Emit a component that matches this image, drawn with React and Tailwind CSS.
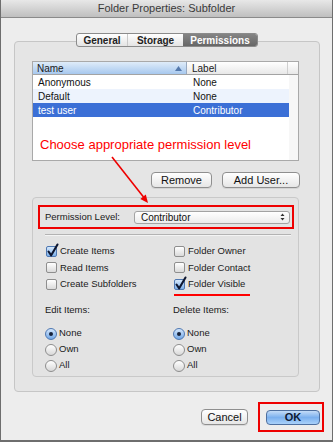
import React from "react";

const font = { fontFamily: '"Liberation Sans", Arial, sans-serif' };

function CheckBox({ checked, label }) {
  return (
    <div className="flex items-center h-[16.5px] gap-[3px]">
      <div
        className={
          checked
            ? "relative w-[11px] h-[11px] rounded-[2px] border border-[#4f78b2] bg-linear-to-b from-[#d6e8fb] to-[#7cb0ea]"
            : "relative w-[11px] h-[11px] rounded-[2px] border border-[#8e8e8e] bg-linear-to-b from-white to-[#dadada]"
        }
      >
        {checked && (
          <svg className="absolute -left-[1px] -top-[4px]" width="14" height="15" viewBox="0 0 14 15">
            <path d="M2.5 8.5 L5.2 12.3 L11.5 1.5" fill="none" stroke="#0d1630" strokeWidth="2.1" strokeLinecap="round" strokeLinejoin="round" />
          </svg>
        )}
      </div>
      <span className="text-[9.5px] text-[#1a1a1a]">{label}</span>
    </div>
  );
}

function Radio({ on, label }) {
  return (
    <div className="flex items-center h-[16px] gap-[2px]">
      <div
        className={
          on
            ? "flex items-center justify-center w-[12px] h-[12px] rounded-full border border-[#4f78b2] bg-linear-to-b from-[#d3e6fb] to-[#72a8e7]"
            : "w-[12px] h-[12px] rounded-full border border-[#8e8e8e] bg-linear-to-b from-white to-[#d8d8d8]"
        }
      >
        {on && <div className="w-[4px] h-[4px] rounded-full bg-[#16223a]" />}
      </div>
      <span className="text-[9.5px] text-[#1a1a1a]">{label}</span>
    </div>
  );
}

function Button({ children, className = "" }) {
  return (
    <div
      className={
        "flex items-center justify-center h-[16px] rounded-[4px] border border-[#8f8f8f] bg-linear-to-b from-white to-[#e6e6e6] text-[11px] text-[#111] shadow-[0_1px_0_rgba(0,0,0,0.08)] " +
        className
      }
    >
      {children}
    </div>
  );
}

export default function App() {
  const users = [
    { name: "Anonymous", label: "None" },
    { name: "Default", label: "None" },
    { name: "test user", label: "Contributor", selected: true },
  ];

  return (
    <div style={font} className="relative w-[333px] h-[442px] bg-[#ededed] border-x border-b-2 border-[#6e6e6e] overflow-hidden">
      {/* title bar */}
      <div className="h-[18px] flex items-center justify-center bg-linear-to-b from-[#e8e8e8] to-[#bfbfbf] border-b border-[#8a8a8a]">
        <span className="text-[11px] text-[#3a3a3a]">Folder Properties: Subfolder</span>
      </div>

      {/* tabs */}
      <div className="relative z-10 flex justify-center mt-[15px] pl-[1px]">
        <div className="flex h-[14px] rounded-[3px] border border-[#8b8b8b] bg-linear-to-b from-white to-[#e4e4e4] overflow-hidden text-[10px] font-bold">
          <div className="w-[51px] flex items-center justify-center text-[#222] border-r border-[#c9c9c9]">General</div>
          <div className="w-[55px] flex items-center justify-center text-[#222]">Storage</div>
          <div className="w-[74px] flex items-center justify-center text-white bg-linear-to-b from-[#858585] to-[#676767]">Permissions</div>
        </div>
      </div>

      {/* outer group box */}
      <div className="-mt-[6px] ml-[13px] w-[306px] h-[351px] rounded-[4px] border border-[#c6c6c6] bg-[#e5e5e5] pt-[19px] pl-[17px]">
        {/* table */}
        <div className="w-[267px] h-[100px] border border-[#a9a9a9] bg-white flex flex-col">
          <div className="flex h-[13px] border-b border-[#a3a3a3] text-[10px] text-[#1a1a1a]">
            <div className="w-[154px] flex items-center justify-between pl-[4px] pr-[4px] bg-linear-to-b from-[#dfecf9] to-[#a7c8ee] border-r border-[#98a9c0]">
              <span>Name</span>
              <svg width="7" height="5" viewBox="0 0 7 5">
                <path d="M0 5 L3.5 0 L7 5 Z" fill="#5479ac" />
              </svg>
            </div>
            <div className="w-[101px] flex items-center pl-[5px] bg-linear-to-b from-white to-[#e8e8e8] border-r border-[#cfcfcf]">Label</div>
            <div className="flex-1 bg-linear-to-b from-white to-[#e8e8e8]" />
          </div>
          <div className="flex flex-1">
            <div className="w-[256px] flex flex-col">
              {users.map((u, i) => (
                <div
                  key={u.name}
                  className={
                    "flex h-[14px] items-center text-[10px] " +
                    (u.selected ? "bg-[#3b6fd6] text-white" : i % 2 ? "bg-[#edf3fd] text-[#111]" : "bg-white text-[#111]")
                  }
                >
                  <span className="w-[155px] pl-[5px]">{u.name}</span>
                  <span className="pl-[5px]">{u.label}</span>
                </div>
              ))}
              <div className="mt-[20px] pl-[7px] text-[13px] leading-[15px] text-[#ff0000]">Choose appropriate permission level</div>
            </div>
            <div className="flex-1 bg-[#f7f7f7]" />
          </div>
        </div>

        {/* buttons */}
        <div className="flex justify-end gap-[10px] mt-[11px] w-[268px]">
          <Button className="w-[61px]">Remove</Button>
          <Button className="w-[78px]">Add User...</Button>
        </div>

        {/* inner group box */}
        <div className="mt-[9px] w-[267px] h-[180px] rounded-[4px] border border-[#c9c9c9] bg-[#e3e3e3] pt-[7px]">
          <div className="ml-[5px] w-[256px] h-[24px] border-2 border-[#ee0000] flex items-center pl-[5px] pr-[2px]">
            <span className="w-[89px] text-[9.5px] text-[#1a1a1a]">Permission Level:</span>
            <div className="flex-1 h-[13px] flex items-center justify-between rounded-[3px] border border-[#a3a3a3] bg-linear-to-b from-white to-[#ececec] pl-[6px] pr-[4px]">
              <span className="text-[10px] text-[#111]">Contributor</span>
              <svg width="5" height="8" viewBox="0 0 5 8">
                <path d="M0.5 3 L2.5 0.5 L4.5 3 Z M0.5 5 L2.5 7.5 L4.5 5 Z" fill="#333" />
              </svg>
            </div>
          </div>

          <div className="ml-[12px] mt-[5px] w-[246px] h-[2px] border-t border-[#b3b3b3] border-b border-b-[#f4f4f4]" />

          <div className="grid grid-cols-[128px_1fr] pl-[13px] mt-[7px]">
            <div className="flex flex-col">
              <CheckBox checked label="Create Items" />
              <CheckBox label="Read Items" />
              <CheckBox label="Create Subfolders" />
            </div>
            <div className="flex flex-col">
              <CheckBox label="Folder Owner" />
              <CheckBox label="Folder Contact" />
              <div className="relative">
                <CheckBox checked label="Folder Visible" />
                <div className="absolute left-0 top-[18px] w-[76px] h-[1.5px] bg-[#ff0000]" />
              </div>
            </div>
          </div>

          <div className="grid grid-cols-[128px_1fr] pl-[12px] mt-[11px]">
            <div className="flex flex-col">
              <span className="text-[9.5px] text-[#1a1a1a] h-[12px] leading-[12px]">Edit Items:</span>
              <div className="flex flex-col mt-[10px]">
                <Radio on label="None" />
                <Radio label="Own" />
                <Radio label="All" />
              </div>
            </div>
            <div className="flex flex-col">
              <span className="text-[9.5px] text-[#1a1a1a] h-[12px] leading-[12px]">Delete Items:</span>
              <div className="flex flex-col mt-[10px]">
                <Radio on label="None" />
                <Radio label="Own" />
                <Radio label="All" />
              </div>
            </div>
          </div>
        </div>
      </div>

      {/* bottom buttons */}
      <div className="flex justify-end items-center gap-[10px] mt-[10px] mr-[8px]">
        <Button className="w-[47px]">Cancel</Button>
        <div className="w-[66px] h-[30px] border-2 border-[#ee0000] pt-[6px] pl-[6px]">
          <div className="w-[54px] h-[15px] flex items-center justify-center rounded-[4px] border border-[#4e6f9f] bg-linear-to-b from-[#c4dcf7] via-[#7bb0ee] to-[#a9d1fa] text-[11px] font-bold text-[#0f1a33]">
            OK
          </div>
        </div>
      </div>

      {/* annotation arrow */}
      <svg className="absolute left-0 top-0 pointer-events-none" width="333" height="442" viewBox="0 0 333 442">
        <line x1="111" y1="157" x2="142.5" y2="197" stroke="#ee0000" strokeWidth="1.6" />
        <polygon points="147,203 139.3,198.9 144.8,194.5" fill="#ee0000" />
      </svg>
    </div>
  );
}
